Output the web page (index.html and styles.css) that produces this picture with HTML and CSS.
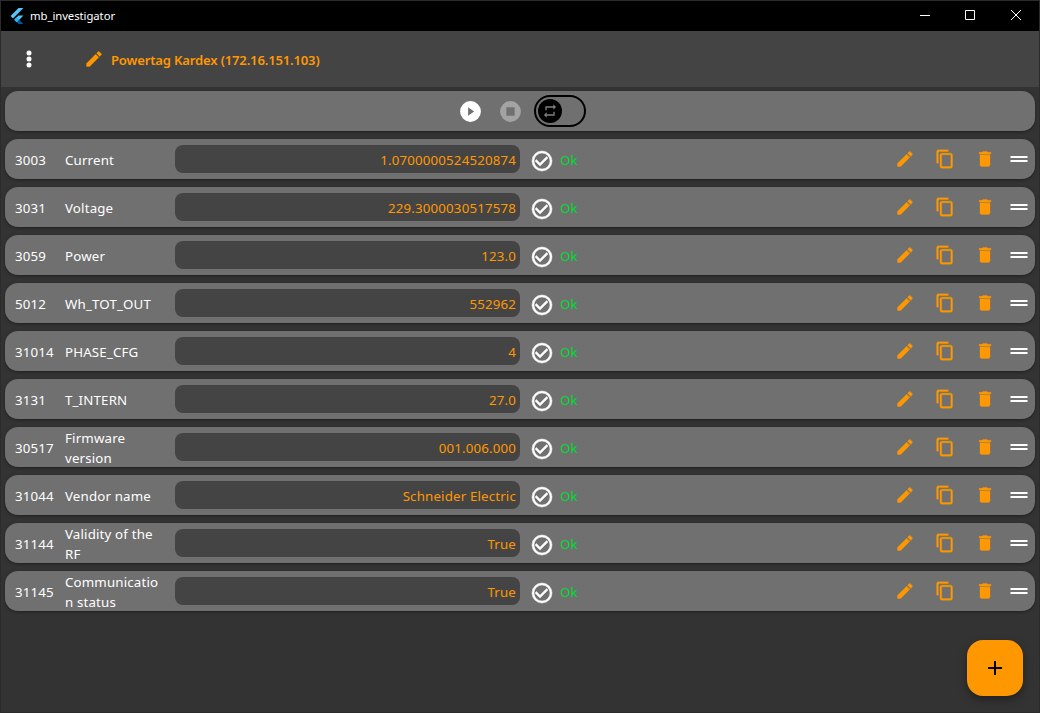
FILE: index.html
```html
<!DOCTYPE html>
<html lang="en">
<head>
<meta charset="utf-8">
<title>mb_investigator</title>
<link rel="stylesheet" href="styles.css">
</head>
<body>
<svg class="sprite" aria-hidden="true">
  <symbol id="edit" viewBox="0 0 24 24"><path d="M3 17.25V21h3.75L17.81 9.94l-3.75-3.75L3 17.25zM20.71 7.04a1 1 0 0 0 0-1.41l-2.34-2.34a1 1 0 0 0-1.41 0l-1.83 1.83 3.75 3.75 1.83-1.83z"/></symbol>
  <symbol id="copy" viewBox="0 0 24 24"><path d="M16 1H4c-1.1 0-2 .9-2 2v14h2V3h12V1zm3 4H8c-1.1 0-2 .9-2 2v14c0 1.1.9 2 2 2h11c1.1 0 2-.9 2-2V7c0-1.1-.9-2-2-2zm0 16H8V7h11v14z"/></symbol>
  <symbol id="trash" viewBox="0 0 24 24"><path d="M6 19c0 1.1.9 2 2 2h8c1.1 0 2-.9 2-2V7H6v12zM19 4h-3.5l-1-1h-5l-1 1H5v2h14V4z"/></symbol>
  <symbol id="drag" viewBox="0 0 18 6"><path d="M.5 0h17v2H.5zM.5 4h17v2H.5z"/></symbol>
  <symbol id="check" viewBox="0 0 24 24"><path d="M16.59 7.58L10 14.17l-3.59-3.58L5 12l5 5 8-8zM12 2a10 10 0 1 0 0 20 10 10 0 0 0 0-20zm0 18a8 8 0 1 1 0-16 8 8 0 0 1 0 16z"/></symbol>
</svg>
<div class="window">
  <header class="titlebar">
    <svg class="logo" viewBox="0 0 24 24"><path fill="#54c5f8" d="M14.3 0L2.3 12 6 15.7 21.7 0zM14.3 11.1L7.9 17.5l3.7 3.7 10.1-10.1z"/><path fill="#01579b" d="M11.6 21.2l2.7 2.8h7.4l-6.4-6.5z"/><path fill="#29b6f6" d="M7.9 17.5l3.7-3.7 3.7 3.7-3.7 3.7z"/></svg>
    <span class="app-name">mb_investigator</span>
    <svg class="win-icon" viewBox="0 0 46 30"><path d="M19 14.5h10"/></svg>
    <svg class="win-icon" viewBox="0 0 46 30"><path d="M18.5 9.5h9v9h-9z"/></svg>
    <svg class="win-icon" viewBox="0 0 46 30"><path d="M18 9l10 10M28 9L18 19"/></svg>
  </header>
  <div class="appbar">
    <svg class="dots" viewBox="0 0 24 24"><circle cx="12" cy="6" r="2.5"/><circle cx="12" cy="12" r="2.5"/><circle cx="12" cy="18" r="2.5"/></svg>
    <svg class="icon"><use href="#edit"/></svg>
    <h1 class="title">Powertag Kardex (172.16.151.103)</h1>
  </div>
  <main class="list">
    <div class="card controls">
      <svg class="control" viewBox="0 0 24 24"><path fill-rule="evenodd" d="M12 2a10 10 0 1 0 0 20 10 10 0 0 0 0-20zM9.7 8v8l5.8-4z"/></svg>
      <svg class="control disabled" viewBox="0 0 24 24"><path fill-rule="evenodd" d="M12 2a10 10 0 1 0 0 20 10 10 0 0 0 0-20zM8 8h8v8H8z"/></svg>
      <div class="switch"><div class="thumb"><svg class="repeat" viewBox="0 0 24 24"><path d="M7 7h10v3l4-4-4-4v3H5v6h2V7zm10 10H7v-3l-4 4 4 4v-3h12v-6h-2v4z"/></svg></div></div>
    </div>
    <div class="card row"><span class="reg">3003</span><span class="name">Current</span><span class="value">1.0700000524520874</span><svg class="check"><use href="#check"/></svg><span class="ok">Ok</span><svg class="icon"><use href="#edit"/></svg><svg class="icon"><use href="#copy"/></svg><svg class="icon"><use href="#trash"/></svg><svg class="drag"><use href="#drag"/></svg></div>
    <div class="card row"><span class="reg">3031</span><span class="name">Voltage</span><span class="value">229.3000030517578</span><svg class="check"><use href="#check"/></svg><span class="ok">Ok</span><svg class="icon"><use href="#edit"/></svg><svg class="icon"><use href="#copy"/></svg><svg class="icon"><use href="#trash"/></svg><svg class="drag"><use href="#drag"/></svg></div>
    <div class="card row"><span class="reg">3059</span><span class="name">Power</span><span class="value">123.0</span><svg class="check"><use href="#check"/></svg><span class="ok">Ok</span><svg class="icon"><use href="#edit"/></svg><svg class="icon"><use href="#copy"/></svg><svg class="icon"><use href="#trash"/></svg><svg class="drag"><use href="#drag"/></svg></div>
    <div class="card row"><span class="reg">5012</span><span class="name">Wh_TOT_OUT</span><span class="value">552962</span><svg class="check"><use href="#check"/></svg><span class="ok">Ok</span><svg class="icon"><use href="#edit"/></svg><svg class="icon"><use href="#copy"/></svg><svg class="icon"><use href="#trash"/></svg><svg class="drag"><use href="#drag"/></svg></div>
    <div class="card row"><span class="reg">31014</span><span class="name">PHASE_CFG</span><span class="value">4</span><svg class="check"><use href="#check"/></svg><span class="ok">Ok</span><svg class="icon"><use href="#edit"/></svg><svg class="icon"><use href="#copy"/></svg><svg class="icon"><use href="#trash"/></svg><svg class="drag"><use href="#drag"/></svg></div>
    <div class="card row"><span class="reg">3131</span><span class="name">T_INTERN</span><span class="value">27.0</span><svg class="check"><use href="#check"/></svg><span class="ok">Ok</span><svg class="icon"><use href="#edit"/></svg><svg class="icon"><use href="#copy"/></svg><svg class="icon"><use href="#trash"/></svg><svg class="drag"><use href="#drag"/></svg></div>
    <div class="card row"><span class="reg">30517</span><span class="name">Firmware<br>version</span><span class="value">001.006.000</span><svg class="check"><use href="#check"/></svg><span class="ok">Ok</span><svg class="icon"><use href="#edit"/></svg><svg class="icon"><use href="#copy"/></svg><svg class="icon"><use href="#trash"/></svg><svg class="drag"><use href="#drag"/></svg></div>
    <div class="card row"><span class="reg">31044</span><span class="name">Vendor name</span><span class="value">Schneider Electric</span><svg class="check"><use href="#check"/></svg><span class="ok">Ok</span><svg class="icon"><use href="#edit"/></svg><svg class="icon"><use href="#copy"/></svg><svg class="icon"><use href="#trash"/></svg><svg class="drag"><use href="#drag"/></svg></div>
    <div class="card row"><span class="reg">31144</span><span class="name">Validity of the<br>RF</span><span class="value">True</span><svg class="check"><use href="#check"/></svg><span class="ok">Ok</span><svg class="icon"><use href="#edit"/></svg><svg class="icon"><use href="#copy"/></svg><svg class="icon"><use href="#trash"/></svg><svg class="drag"><use href="#drag"/></svg></div>
    <div class="card row"><span class="reg">31145</span><span class="name">Communicatio<br>n status</span><span class="value">True</span><svg class="check"><use href="#check"/></svg><span class="ok">Ok</span><svg class="icon"><use href="#edit"/></svg><svg class="icon"><use href="#copy"/></svg><svg class="icon"><use href="#trash"/></svg><svg class="drag"><use href="#drag"/></svg></div>
  </main>
  <button class="fab" aria-label="Add"><svg viewBox="0 0 24 24"><path d="M19 13h-6v6h-2v-6H5v-2h6V5h2v6h6z"/></svg></button>
</div>
</body>
</html>
```
FILE: styles.css
```css
* { box-sizing: border-box; }
body { margin: 0; background: #333; font-family: "Noto Sans", "Open Sans", sans-serif; font-size: 13.3px; letter-spacing: .16px; line-height: 20px; color: #fff; }
svg { display: block; flex: none; }
.sprite { position: absolute; width: 0; height: 0; }
.window { position: relative; width: 1040px; height: 713px; overflow: hidden; border: 1px solid #2b2b2b; }
.titlebar { display: flex; align-items: center; height: 30px; padding-left: 8px; background: #000; }
.logo { width: 16px; height: 16px; }
.app-name { flex: 1; margin-left: 5px; font-size: 11.3px; letter-spacing: -.05px; }
.win-icon { width: 46px; height: 30px; fill: none; stroke: #fff; stroke-width: 1; }
.appbar { display: flex; align-items: center; height: 56px; padding-left: 16px; background: #444; }
.dots { width: 24px; height: 24px; fill: #fff; }
.icon { width: 20px; height: 20px; fill: #ff9800; stroke: #ff9800; stroke-width: .4; }
.appbar .icon { margin: 0 7px 0 43px; }
.title { margin: 2px 0 0; font-size: 13.1px; font-weight: 600; letter-spacing: -.18px; color: #ff9800; }
.list { display: flex; flex-direction: column; gap: 8px; padding: 4px; }
.card { display: flex; align-items: center; height: 40px; border-radius: 13px; background: #707070; box-shadow: 0 1px 3px rgba(0, 0, 0, .4); }
.controls { justify-content: center; padding-left: 4px; }
.control { width: 25px; height: 25px; margin-right: 15px; fill: #fff; }
.disabled { margin-right: 11px; fill: #a3a3a3; }
.switch { width: 52px; height: 32px; padding: 2px; border: 2px solid #000; border-radius: 16px; }
.thumb { display: flex; align-items: center; justify-content: center; width: 24px; height: 24px; border-radius: 50%; background: #000; }
.repeat { width: 16px; height: 16px; fill: #808080; }
.row { padding: 0 7px 0 10px; }
.reg { width: 50px; padding-top: 2px; }
.name { width: 110px; padding-top: 2px; white-space: nowrap; }
.value { width: 345px; height: 28px; padding: 5px 4px 0 0; border-radius: 8px; background: #444; color: #ff9800; text-align: right; }
.check { width: 24px; height: 24px; margin: 4px 6px 0 10px; fill: #fff; stroke: #fff; stroke-width: .5; }
.ok { flex: 1; padding-top: 2px; color: #00dd33; }
.row .icon { margin-right: 20px; }
.row .icon + .drag { margin-left: -5px; }
.drag { width: 18px; height: 6px; fill: #fff; }
.fab { position: absolute; right: 16px; bottom: 16px; display: flex; align-items: center; justify-content: center; width: 56px; height: 56px; padding: 0; border: 0; border-radius: 16px; background: #ff9800; box-shadow: 0 4px 8px rgba(0, 0, 0, .35); }
.fab svg { width: 24px; height: 24px; }
```
